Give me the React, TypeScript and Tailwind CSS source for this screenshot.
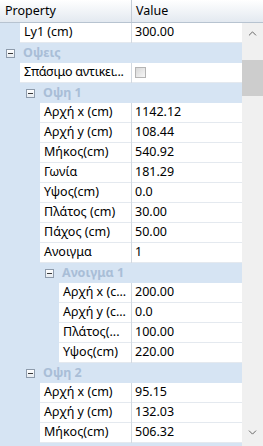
import { ChevronUp, ChevronDown } from 'lucide-react';

type Row =
  | { kind: 'cat'; level: 1 | 2 | 3; name: string }
  | { kind: 'prop'; level: 1 | 2 | 3; name: string; value?: string; checkbox?: boolean; tight?: boolean };

const rows: Row[] = [
  { kind: 'prop', level: 1, name: 'Ly1 (cm)', value: '300.00' },
  { kind: 'cat', level: 1, name: 'Οψεις' },
  { kind: 'prop', level: 1, name: 'Σπάσιμο αντικει...', checkbox: true, tight: true },
  { kind: 'cat', level: 2, name: 'Οψη 1' },
  { kind: 'prop', level: 2, name: 'Αρχή x (cm)', value: '1142.12' },
  { kind: 'prop', level: 2, name: 'Αρχή y (cm)', value: '108.44' },
  { kind: 'prop', level: 2, name: 'Μήκος(cm)', value: '540.92' },
  { kind: 'prop', level: 2, name: 'Γωνία', value: '181.29' },
  { kind: 'prop', level: 2, name: 'Υψος(cm)', value: '0.0' },
  { kind: 'prop', level: 2, name: 'Πλάτος (cm)', value: '30.00' },
  { kind: 'prop', level: 2, name: 'Πάχος (cm)', value: '50.00' },
  { kind: 'prop', level: 2, name: 'Ανοιγμα', value: '1' },
  { kind: 'cat', level: 3, name: 'Ανοιγμα 1' },
  { kind: 'prop', level: 3, name: 'Αρχή x (c...', value: '200.00' },
  { kind: 'prop', level: 3, name: 'Αρχή y (c...', value: '0.0' },
  { kind: 'prop', level: 3, name: 'Πλάτος(...', value: '100.00' },
  { kind: 'prop', level: 3, name: 'Υψος(cm)', value: '220.00' },
  { kind: 'cat', level: 2, name: 'Οψη 2' },
  { kind: 'prop', level: 2, name: 'Αρχή x (cm)', value: '95.15' },
  { kind: 'prop', level: 2, name: 'Αρχή y (cm)', value: '132.03' },
  { kind: 'prop', level: 2, name: 'Μήκος(cm)', value: '506.32' },
  { kind: 'cat', level: 2, name: '' },
];

const propIndent = { 1: 'w-[20px]', 2: 'w-[40px]', 3: 'w-[59px]' };
const catIndent = { 1: 'pl-[6px]', 2: 'pl-[26px]', 3: 'pl-[45px]' };

function MinusBox() {
  return (
    <span className="flex h-[9px] w-[9px] shrink-0 items-center justify-center border border-[#8e9bab] bg-gradient-to-b from-white to-[#e6ebf1]">
      <span className="h-px w-[5px] bg-[#3a3a3a]" />
    </span>
  );
}

function CategoryRow({ row }: { row: Extract<Row, { kind: 'cat' }> }) {
  return (
    <div className={`flex h-[20px] items-center gap-[8px] bg-[#d6e4f3] ${catIndent[row.level]}`}>
      {row.name && <MinusBox />}
      <span className="whitespace-nowrap font-bold text-[#a9bed7]">{row.name}</span>
    </div>
  );
}

function PropRow({ row }: { row: Extract<Row, { kind: 'prop' }> }) {
  return (
    <div className="flex h-[20px] bg-[#e4e9ef]">
      <div className="flex w-[131px] shrink-0">
        <div className={`h-full shrink-0 bg-[#d6e4f3] ${propIndent[row.level]}`} />
        <div
          className={`flex h-[19px] min-w-0 flex-1 items-center overflow-hidden whitespace-nowrap bg-white pl-[4px] ${
            row.tight ? 'tracking-[-0.25px]' : ''
          }`}
        >
          {row.name}
        </div>
      </div>
      <div className="h-full w-px bg-[#d2d9e1]" />
      <div className="flex h-[19px] flex-1 items-center bg-white pl-[3px]">
        {row.checkbox ? (
          <span className="h-[11px] w-[11px] border border-[#b4b4b4] bg-gradient-to-br from-[#d8d8d8] to-[#f6f6f6]" />
        ) : (
          row.value
        )}
      </div>
    </div>
  );
}

export default function App() {
  return (
    <div
      className="flex h-[446px] w-[263px] flex-col overflow-hidden bg-white text-[12.5px] leading-none text-black"
      style={{ fontFamily: '"Segoe UI", "Noto Sans", "Liberation Sans", sans-serif' }}
    >
      {/* Header */}
      <div className="flex h-[23px] shrink-0 border-b border-[#b7c3d0] bg-gradient-to-b from-white to-[#e3e9f0]">
        <div className="flex w-[131px] items-center pl-[5px]">Property</div>
        <div className="w-px bg-[#c4ccd6]" />
        <div className="flex flex-1 items-center pl-[4px]">Value</div>
      </div>

      <div className="flex min-h-0 flex-1">
        {/* Grid */}
        <div className="w-[242px] shrink-0 overflow-hidden">
          {rows.map((row, i) =>
            row.kind === 'cat' ? <CategoryRow key={i} row={row} /> : <PropRow key={i} row={row} />
          )}
        </div>

        {/* Scrollbar */}
        <div className="flex flex-1 flex-col bg-[#f0f0f0]">
          <div className="flex h-[21px] items-center justify-center text-[#606060]">
            <ChevronUp size={13} strokeWidth={1.75} />
          </div>
          <div className="mt-[16px] h-[36px] bg-[#cdcdcd]" />
          <div className="flex-1" />
          <div className="mb-[3px] flex h-[21px] items-center justify-center text-[#606060]">
            <ChevronDown size={13} strokeWidth={1.75} />
          </div>
        </div>
      </div>
    </div>
  );
}
